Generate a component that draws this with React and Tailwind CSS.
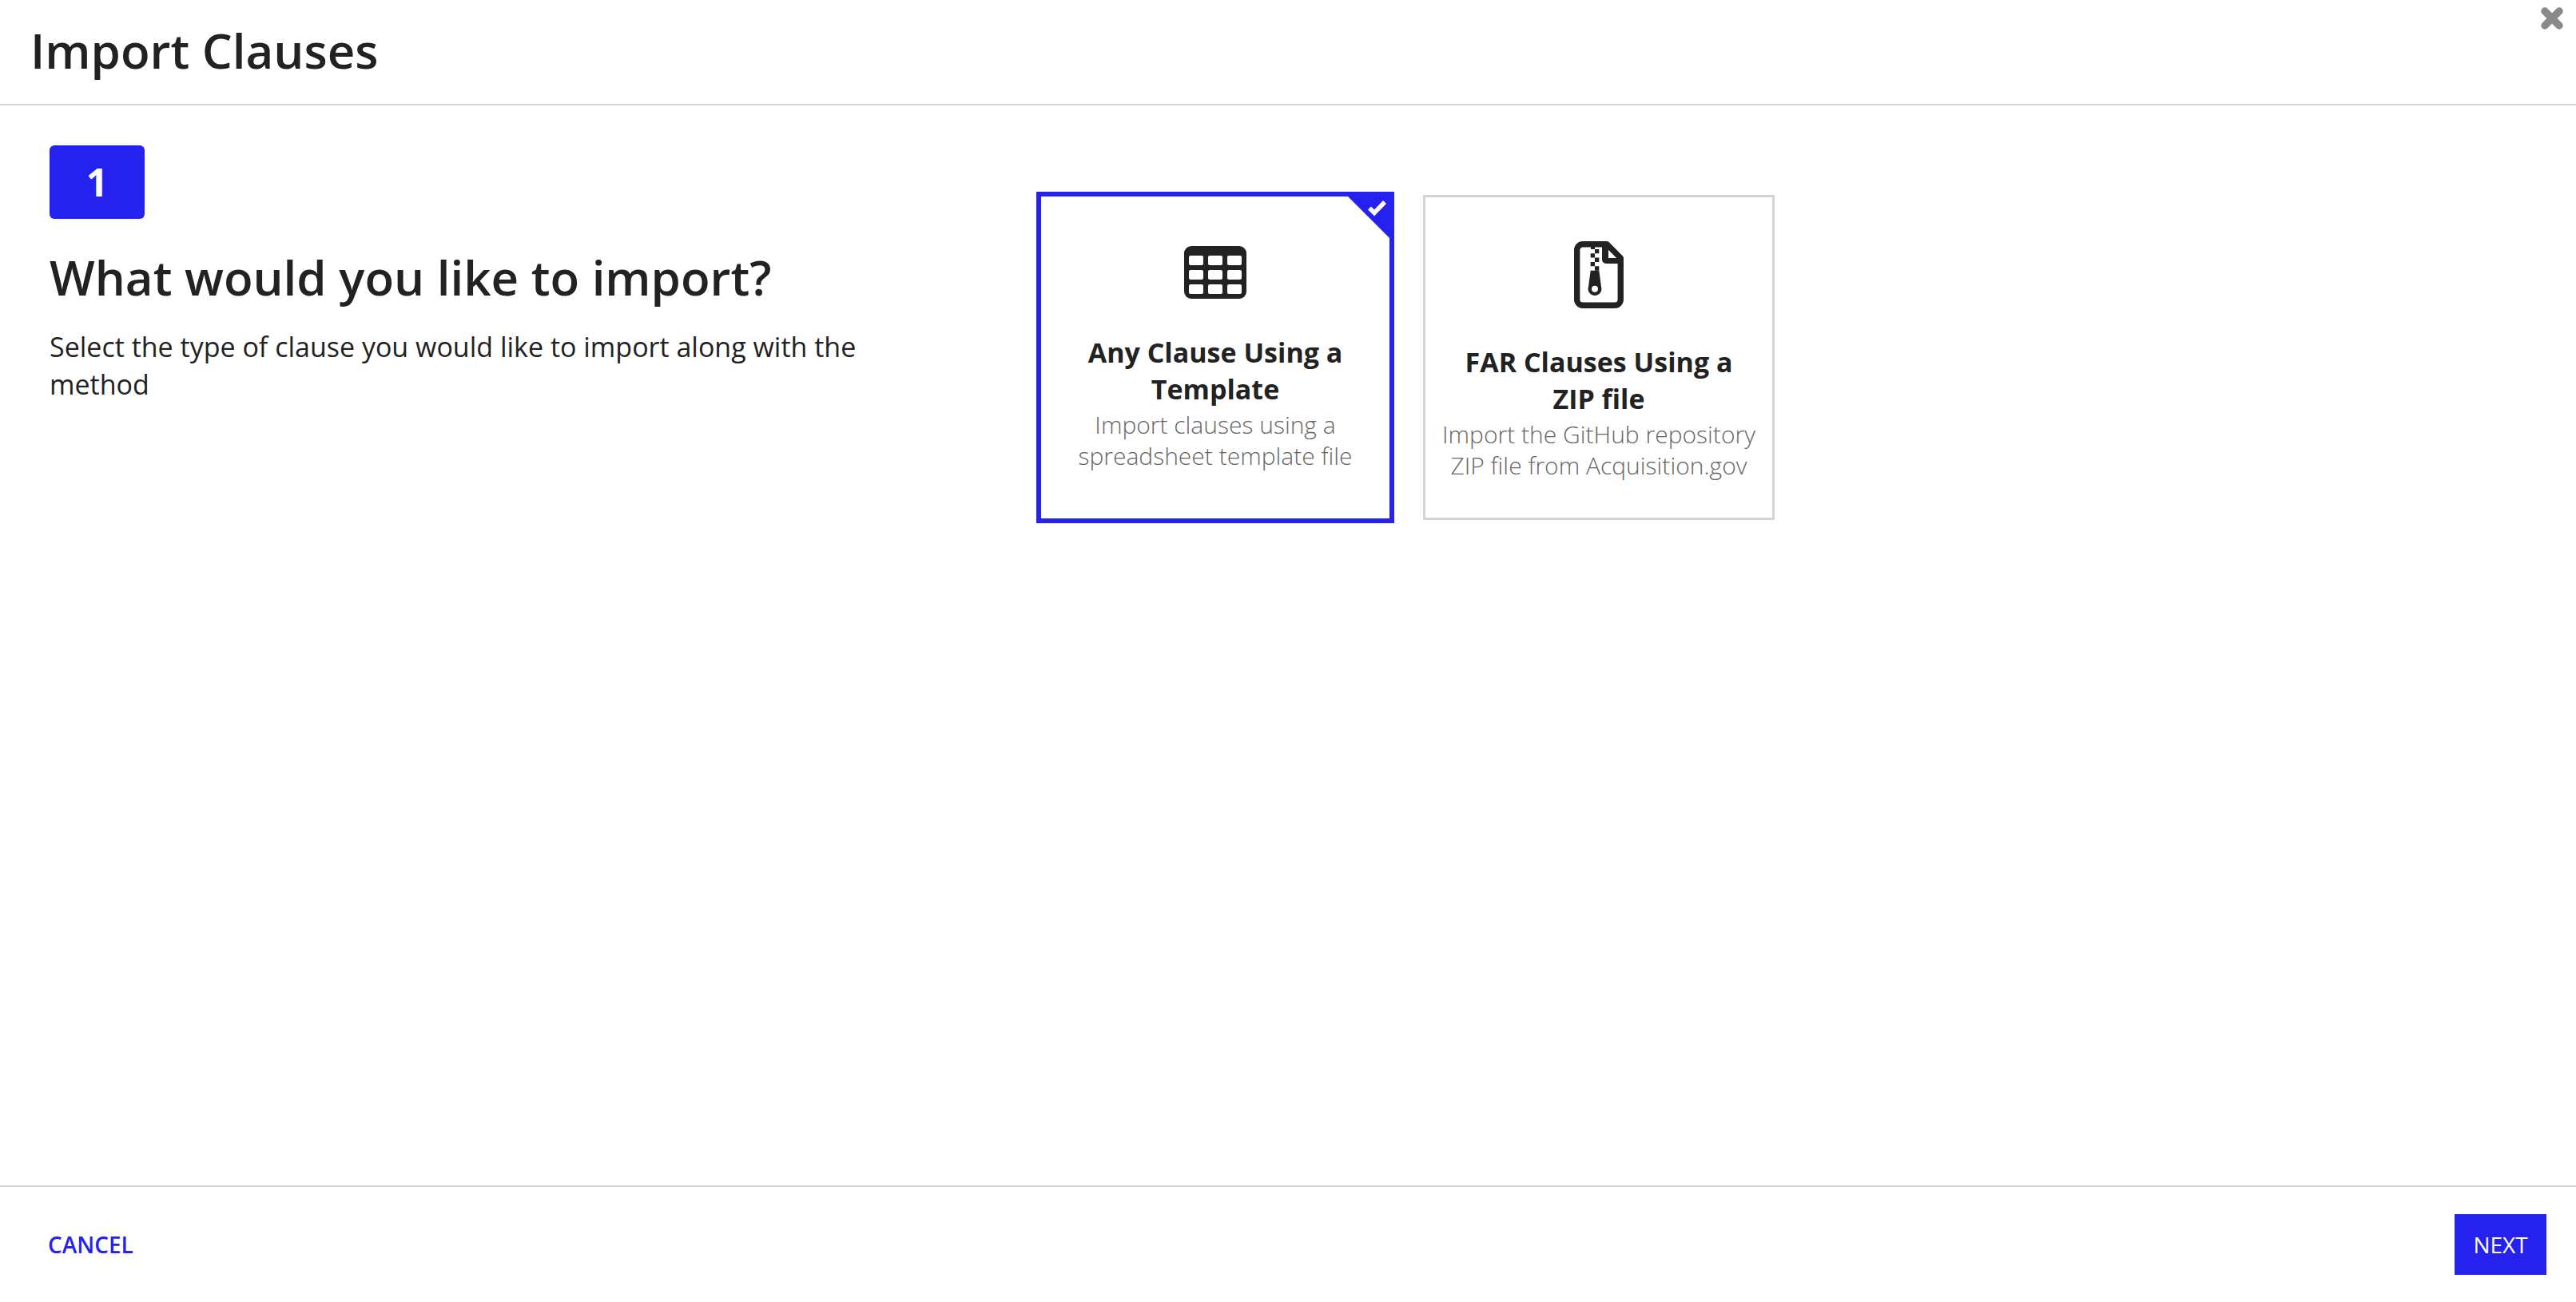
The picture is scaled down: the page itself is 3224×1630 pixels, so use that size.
import React from 'react';

const TableIcon = () => (
  <svg width="78" height="66" viewBox="0 0 78 66" className="block">
    <rect width="78" height="66" rx="9" fill="#222222" />
    {[12, 30, 48].map((y) =>
      [6, 30, 54].map((x) => (
        <rect key={`${x}-${y}`} x={x} y={y} width="18" height="12" rx="2" fill="#ffffff" />
      ))
    )}
  </svg>
);

const ZipIcon = () => (
  <svg width="62" height="84" viewBox="0 0 62 84" className="block">
    <path
      d="M11 3.7H41L58.3 21V73a7.3 7.3 0 0 1-7.3 7.3H11A7.3 7.3 0 0 1 3.7 73V11A7.3 7.3 0 0 1 11 3.7Z"
      fill="none"
      stroke="#222222"
      strokeWidth="7.4"
      strokeLinejoin="round"
    />
    <path d="M35 5H43V21H58V28H40a5 5 0 0 1-5-5Z" fill="#222222" />
    <path d="M21 7H26V10H21ZM26 10H31.3V15.3H26ZM20.7 15.3H26V20.6H20.7ZM26 20.6H31.3V26H26ZM20.7 26H26V31.3H20.7ZM26 31.3H31.3V36.7H26Z" fill="#222222" />
    <path
      d="M20.7 36.7H31.3L34 57a8.4 8.4 0 1 1-16 0ZM26 55.7a4 4 0 1 0 0 8a4 4 0 1 0 0-8Z"
      fill="#222222"
      fillRule="evenodd"
    />
  </svg>
);

const OptionCard = ({ selected, icon, iconBox, title, lines }) => (
  <div
    className={`relative flex flex-col items-center shrink-0 bg-white ${
      selected
        ? 'w-[448px] h-[415px] border-[6px] border-[#2522f0] pt-[62px]'
        : 'w-[440px] h-[407px] border-[3px] border-[#d4d4d4] pt-[55px]'
    }`}
  >
    {selected && (
      <div className="absolute top-0 right-0 w-[52px] h-[52px]">
        <svg width="52" height="52" viewBox="0 0 52 52" className="block">
          <path d="M0 0H52V52Z" fill="#2522f0" />
          <path d="M27 14.5L33 20.5L46 7" fill="none" stroke="#ffffff" strokeWidth="5.5" />
        </svg>
      </div>
    )}
    <div className={`flex items-center justify-center ${iconBox}`}>{icon}</div>
    <div className="mt-[44px] text-center text-[34px] leading-[46px] font-bold text-[#222222]">
      {title.map((line) => (
        <div key={line}>{line}</div>
      ))}
    </div>
    <div className="mt-[2px] text-center text-[30px] leading-[39px] font-light text-[#666666] whitespace-nowrap">
      {lines.map((line) => (
        <div key={line}>{line}</div>
      ))}
    </div>
  </div>
);

const App = () => {
  return (
    <div className="relative h-[1630px] w-full flex flex-col bg-white font-['Open_Sans',sans-serif] text-[#222222]">
      <button className="absolute top-[9px] right-[16px]" aria-label="Close">
        <svg width="28" height="28" viewBox="0 0 28 28" className="block">
          <path d="M5 5L23 23M23 5L5 23" stroke="#8a8a8a" strokeWidth="9.5" strokeLinecap="round" />
        </svg>
      </button>

      <div className="h-[132px] shrink-0 flex items-center pl-[38px] border-b-2 border-[#d4d4d4]">
        <h1 className="text-[60px] leading-[82px] font-semibold -mt-[4px]">Import Clauses</h1>
      </div>

      <div className="flex-1 flex min-h-0">
        <div className="w-[1297px] shrink-0 pl-[62px] pt-[50px]">
          <div className="w-[119px] h-[92px] rounded-md bg-[#2522f0] flex items-center justify-center text-white text-[48px] font-bold">
            1
          </div>
          <h2 className="mt-[32px] text-[60px] leading-[82px] font-semibold">What would you like to import?</h2>
          <p className="mt-[23px] w-[1040px] text-[34px] leading-[47px]">
            Select the type of clause you would like to import along with the method
          </p>
        </div>
        <div className="pt-[108px] flex items-center gap-[36px] self-start">
          <OptionCard
            selected
            icon={<TableIcon />}
            iconBox="h-[66px]"
            title={['Any Clause Using a', 'Template']}
            lines={['Import clauses using a', 'spreadsheet template file']}
          />
          <OptionCard
            icon={<ZipIcon />}
            iconBox="h-[84px]"
            title={['FAR Clauses Using a', 'ZIP file']}
            lines={['Import the GitHub repository', 'ZIP file from Acquisition.gov']}
          />
        </div>
      </div>

      <div className="h-[146px] shrink-0 flex items-center justify-between pl-[60px] pr-[37px] border-t-2 border-[#d4d4d4]">
        <button className="text-[28px] font-semibold text-[#2522f0]">CANCEL</button>
        <button className="w-[115px] h-[76px] bg-[#2522f0] text-white text-[28px] font-medium">NEXT</button>
      </div>
    </div>
  );
};

export default App;
